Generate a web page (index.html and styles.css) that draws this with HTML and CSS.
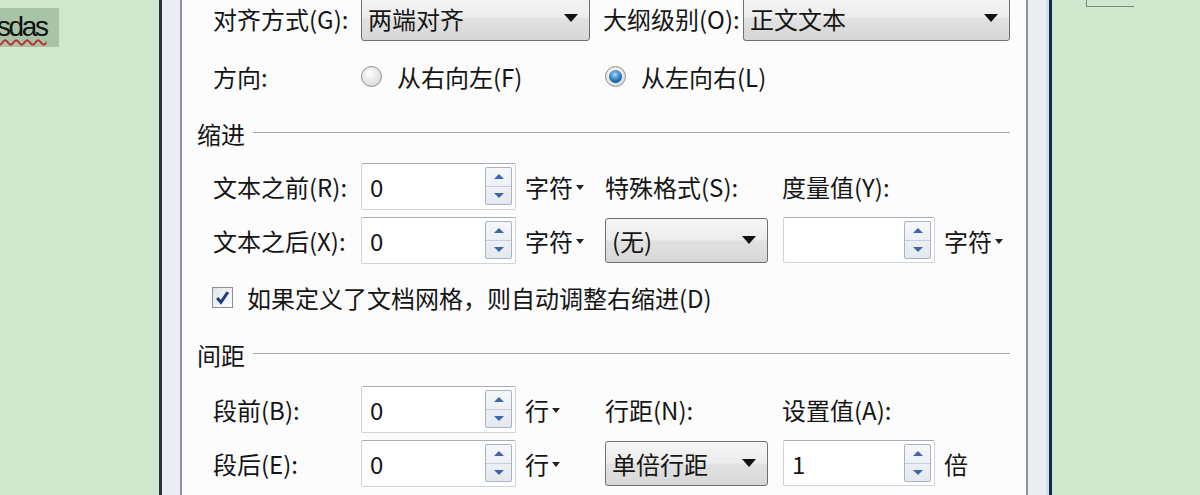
FILE: index.html
```html
<!DOCTYPE html>
<html>
  <head>
    <meta charset="UTF-8" />
    <title>段落</title>
    <link rel="stylesheet" href="styles.css">
  </head>
  <body>
    <div class="doc doc_left">
      <span class="hl"><span class="typo">sdas</span></span>
    </div>

    <div class="dlg">
      <div class="panel">
        <div class="row row_top">
          <span class="lbl lbl_first">对齐方式(G):</span>
          <div class="combo combo_align"><span>两端对齐</span><i class="tri"></i></div>
          <span class="lbl lbl_outline">大纲级别(O):</span>
          <div class="combo combo_outline"><span>正文文本</span><i class="tri"></i></div>
        </div>

        <div class="row row_dir">
          <span class="lbl lbl_first">方向:</span>
          <label class="opt opt_rtl"><i class="radio"></i>从右向左(F)</label>
          <label class="opt"><i class="radio on"></i>从左向右(L)</label>
        </div>

        <div class="sec sec_indent"><span>缩进</span><i class="rule"></i></div>

        <div class="grid grid_1">
          <span class="lbl">文本之前(R):</span>
          <div class="spin"><span>0</span><div class="spin_btns"><b><i class="up"></i></b><b><i class="down"></i></b></div></div>
          <span class="unit">字符<i class="mini"></i></span>
          <span class="lbl">特殊格式(S):</span>
          <span class="lbl span2">度量值(Y):</span>
        </div>

        <div class="grid grid_2">
          <span class="lbl">文本之后(X):</span>
          <div class="spin"><span>0</span><div class="spin_btns"><b><i class="up"></i></b><b><i class="down"></i></b></div></div>
          <span class="unit">字符<i class="mini"></i></span>
          <div class="combo combo_small"><span>(无)</span><i class="tri"></i></div>
          <div class="spin spin_small"><span></span><div class="spin_btns"><b><i class="up"></i></b><b><i class="down"></i></b></div></div>
          <span class="unit unit_far">字符<i class="mini"></i></span>
        </div>

        <div class="row row_check">
          <i class="check">
            <svg width="15" height="15" viewBox="0 0 14 14"><path d="M2 7.5 L5.5 11.5 L12 2" fill="none" stroke="#1f3c86" stroke-width="2.8"/></svg>
          </i>
          <span>如果定义了文档网格，则自动调整右缩进(D)</span>
        </div>

        <div class="sec sec_space"><span>间距</span><i class="rule"></i></div>

        <div class="grid grid_3">
          <span class="lbl">段前(B):</span>
          <div class="spin"><span>0</span><div class="spin_btns"><b><i class="up"></i></b><b><i class="down"></i></b></div></div>
          <span class="unit">行<i class="mini"></i></span>
          <span class="lbl">行距(N):</span>
          <span class="lbl span2">设置值(A):</span>
        </div>

        <div class="grid grid_4">
          <span class="lbl">段后(E):</span>
          <div class="spin"><span>0</span><div class="spin_btns"><b><i class="up"></i></b><b><i class="down"></i></b></div></div>
          <span class="unit">行<i class="mini"></i></span>
          <div class="combo combo_small"><span>单倍行距</span><i class="tri"></i></div>
          <div class="spin spin_small"><span>1</span><div class="spin_btns"><b><i class="up"></i></b><b><i class="down"></i></b></div></div>
          <span class="unit unit_far">倍</span>
        </div>
      </div>
    </div>

    <div class="doc doc_right">
      <div class="corner"></div>
    </div>
  </body>
</html>
```

FILE: styles.css
```css
body {
  margin: 0;
  display: flex;
  height: 495px;
  overflow: hidden;
  font-family: "Noto Sans CJK SC", "Noto Sans", sans-serif;
  font-size: 24px;
  color: #151515;
  background: #cfe8cd;
}

.doc {
  background: #cfe8cd;
}

.doc_left {
  width: 159px;
  padding-top: 8px;
  box-sizing: border-box;
}

.hl {
  display: block;
  width: 59px;
  height: 39px;
  overflow: hidden;
  background: #a9c3a7;
  font-family: "Liberation Sans", sans-serif;
  font-size: 28px;
  line-height: 37px;
  letter-spacing: -2.4px;
  color: #111;
}

.typo {
  margin-left: -3px;
  text-decoration: underline wavy #b8302a;
  text-decoration-thickness: 2px;
  text-underline-offset: 3px;
}

.doc_right {
  flex: 1;
}

.corner {
  width: 47px;
  height: 6px;
  margin-left: 34px;
  border-left: 1px solid #7d8b7d;
  border-bottom: 1px solid #7d8b7d;
}

.dlg {
  width: 893px;
  box-sizing: border-box;
  padding: 0 21px 0 18px;
  border-left: 3px solid #2d3137;
  border-right: 3px solid #16283a;
  background: #eaedf2;
  box-shadow: inset -3px 0 0 #c6e2f3;
}

.panel {
  display: flow-root;
  height: 100%;
  box-sizing: border-box;
  padding: 0 16px 0 31px;
  border-left: 2px solid #8c9099;
  border-right: 2px solid #8c9099;
  background: #fcfcfd;
}

.row {
  display: flex;
  align-items: center;
  height: 48px;
}

.row_top {
  margin-top: -6px;
}

.lbl {
  white-space: nowrap;
}

.lbl_first {
  width: 148px;
}

.lbl_outline {
  width: 140px;
  margin-left: 13px;
}

.combo {
  display: flex;
  align-items: center;
  justify-content: space-between;
  box-sizing: border-box;
  height: 46px;
  padding: 0 11px 0 6px;
  border: 1px solid #6f6f6f;
  border-radius: 3px;
  background: linear-gradient(#f6f6f6, #ececec 48%, #e1e1e1 52%, #d7d7d7);
}

.combo_align {
  width: 229px;
}

.combo_outline {
  width: 267px;
}

.combo_small {
  width: 163px;
  height: 45px;
}

.tri {
  width: 0;
  height: 0;
  border-left: 7px solid transparent;
  border-right: 7px solid transparent;
  border-top: 8px solid #111;
}

.row_dir {
  margin-top: 10px;
}

.opt {
  display: flex;
  align-items: center;
  gap: 15px;
}

.opt_rtl {
  width: 244px;
}

.radio {
  position: relative;
  width: 21px;
  height: 21px;
  box-sizing: border-box;
  border: 1px solid #8c8e90;
  border-radius: 50%;
  background: radial-gradient(circle at 40% 35%, #ffffff, #e2e2e2 60%, #cfcfcf);
}

.radio.on::after {
  content: "";
  position: absolute;
  top: 3px;
  left: 3px;
  width: 13px;
  height: 13px;
  border-radius: 50%;
  background: radial-gradient(circle at 45% 35%, #a6ddf8 0, #3f8fd2 40%, #17508f 75%);
}

.sec {
  display: flex;
  align-items: center;
  height: 30px;
  margin-left: -16px;
}

.rule {
  flex: 1;
  margin-left: 8px;
  border-top: 1px solid #a7a7a7;
  border-bottom: 1px solid #ffffff;
}

.sec_indent {
  margin-top: 18px;
}

.sec_space {
  margin-top: 27px;
}

.grid {
  display: grid;
  grid-template-columns: 148px 155px 89px 177px 152px 1fr;
  align-items: center;
  height: 48px;
}

.grid_1 {
  margin-top: 14px;
}

.grid_2,
.grid_4 {
  margin-top: 6px;
}

.grid_3 {
  margin-top: 16px;
}

.span2 {
  grid-column: span 2;
}

.spin {
  display: flex;
  align-items: center;
  justify-content: space-between;
  box-sizing: border-box;
  width: 155px;
  height: 47px;
  padding: 0 3px 0 8px;
  border: 1px solid #cfd3da;
  border-top-color: #a9adb5;
  border-radius: 2px;
  background: #fff;
}

.spin_small {
  width: 152px;
  margin-left: 1px;
  height: 46px;
}

.spin_btns {
  display: flex;
  flex-direction: column;
  width: 27px;
  height: 38px;
  box-sizing: border-box;
  border: 1px solid #aab2bf;
  border-radius: 2px;
  background: linear-gradient(#f5f7fa, #e4e9ef);
}

.spin_btns b {
  flex: 1;
  display: flex;
  align-items: center;
  justify-content: center;
}

.spin_btns b:first-child {
  border-bottom: 1px solid #c6cdd8;
}

.up,
.down {
  width: 0;
  height: 0;
  border-left: 5px solid transparent;
  border-right: 5px solid transparent;
}

.up {
  border-bottom: 5px solid #3d67aa;
}

.down {
  border-top: 5px solid #3d67aa;
}

.unit {
  display: flex;
  align-items: center;
  gap: 3px;
  padding-left: 9px;
  white-space: nowrap;
}

.unit_far {
  padding-left: 10px;
}

.mini {
  width: 0;
  height: 0;
  margin-top: 2px;
  border-left: 4px solid transparent;
  border-right: 4px solid transparent;
  border-top: 5px solid #222;
}

.row_check {
  height: 30px;
  margin-top: 18px;
  gap: 14px;
}

.check {
  display: flex;
  align-items: center;
  justify-content: center;
  width: 21px;
  height: 21px;
  margin-left: -1px;
  box-sizing: border-box;
  border: 1px solid #8c8e90;
  background: linear-gradient(135deg, #dfe3e8, #ffffff);
}
```
